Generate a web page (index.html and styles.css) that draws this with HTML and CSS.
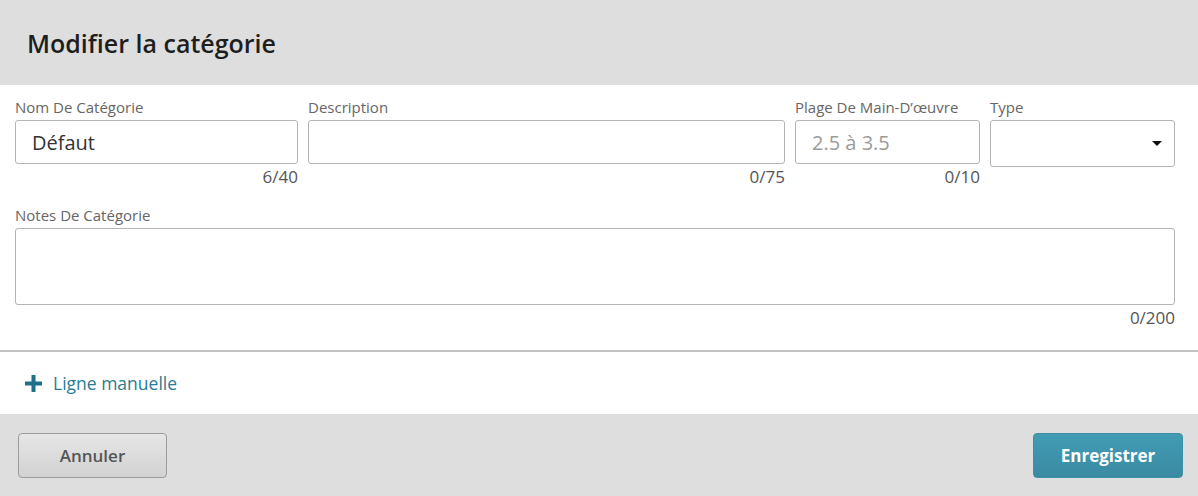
FILE: index.html
```html
<!DOCTYPE html>
<html lang="fr">
<head>
<meta charset="utf-8">
<title>Modifier la catégorie</title>
<link rel="stylesheet" href="styles.css">
</head>
<body>
<div class="dialog">
  <header class="dlg-header">
    <h1 class="dlg-title">Modifier la catégorie</h1>
  </header>
  <section class="dlg-body">
    <div class="row">
      <div class="field f-name">
        <label class="lbl">Nom De Catégorie</label>
        <div class="input">Défaut</div>
        <div class="count">6/40</div>
      </div>
      <div class="field f-desc">
        <label class="lbl">Description</label>
        <div class="input"></div>
        <div class="count">0/75</div>
      </div>
      <div class="field f-range">
        <label class="lbl">Plage De Main-D’œuvre</label>
        <div class="input placeholder">2.5 à 3.5</div>
        <div class="count">0/10</div>
      </div>
      <div class="field f-type">
        <label class="lbl">Type</label>
        <div class="select"><span class="caret"></span></div>
      </div>
    </div>
    <div class="field f-notes">
      <label class="lbl">Notes De Catégorie</label>
      <div class="textarea"></div>
      <div class="count">0/200</div>
    </div>
  </section>
  <div class="manual">
    <svg class="plus" width="17" height="17" viewBox="0 0 17 17"><path d="M6.5 0h4v6.5H17v4h-6.5V17h-4v-6.5H0v-4h6.5z" fill="#1d7089"/></svg>
    <span class="manual-text">Ligne manuelle</span>
  </div>
  <footer class="dlg-footer">
    <button class="btn btn-cancel">Annuler</button>
    <button class="btn btn-save">Enregistrer</button>
  </footer>
</div>
</body>
</html>
```
FILE: styles.css
```css
* { box-sizing: border-box; }
html, body { margin: 0; padding: 0; }
body {
  font-family: "Open Sans", "Noto Sans", sans-serif;
  background: #ffffff;
  width: 1198px;
  height: 496px;
  overflow: hidden;
}
.dialog { display: flex; flex-direction: column; height: 496px; }
.dlg-header {
  height: 85px;
  background: #dedede;
  display: flex;
  align-items: center;
  padding-left: 27px;
}
.dlg-title {
  margin: 0;
  font-size: 25px;
  font-weight: 600;
  color: #1e1e1e;
}
.dlg-body {
  padding: 11px 23px 0 15px;
  height: 267px;
  border-bottom: 2px solid #c2c2c2;
}
.row { display: flex; gap: 10px; }
.field { display: flex; flex-direction: column; }
.f-name { width: 283px; }
.f-desc { width: 477px; }
.f-range { width: 185px; }
.f-type { width: 185px; }
.lbl {
  font-size: 15px;
  color: #666;
  line-height: 22px;
  margin-bottom: 2px;
}
.input {
  height: 44px;
  border: 1px solid #b4b4b4;
  border-radius: 3px;
  padding: 0 16px;
  font-size: 20px;
  color: #333;
  display: flex;
  align-items: center;
}
.placeholder { color: #9a9a9a; }
.select {
  height: 47px;
  border: 1px solid #b4b4b4;
  border-radius: 3px;
  position: relative;
}
.caret {
  position: absolute;
  right: 12px;
  top: 20px;
  width: 0; height: 0;
  border-left: 5px solid transparent;
  border-right: 5px solid transparent;
  border-top: 5px solid #111;
}
.count {
  text-align: right;
  font-size: 17px;
  color: #555;
  line-height: 24px;
  margin-top: 1px;
}
.f-notes { margin-top: 15px; }
.textarea {
  height: 77px;
  border: 1px solid #b4b4b4;
  border-radius: 3px;
}
.f-notes .count { margin-top: 1px; }
.manual {
  height: 62px;
  display: flex;
  align-items: center;
  padding-left: 25px;
  gap: 11px;
}
.manual-text { font-size: 17.5px; color: #2a7b94; }
.dlg-footer {
  flex: 1;
  background: #dedede;
  display: flex;
  justify-content: space-between;
  align-items: flex-start;
  padding: 19px 15px 0 18px;
}
.btn {
  height: 45px;
  width: 149px;
  border-radius: 4px;
  font-family: "Open Sans", "Noto Sans", sans-serif;
  font-size: 17px;
  font-weight: 600;
  cursor: pointer;
}
.btn-cancel {
  border: 1px solid #9c9c9c;
  background: linear-gradient(#e6e6e6, #d2d2d2);
  color: #555;
}
.btn-save {
  width: 150px;
  border: 1px solid #3b8fa6;
  background: linear-gradient(#419cb4, #3a8aa2);
  color: #fff;
  font-weight: 700;
}
```
